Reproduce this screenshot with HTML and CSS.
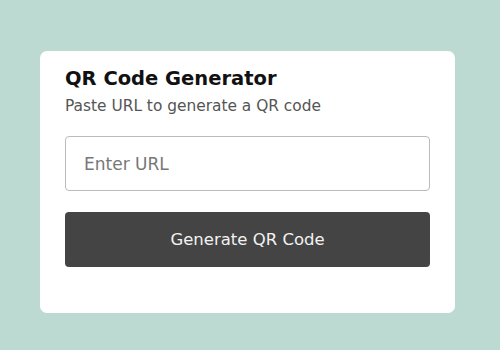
FILE: index.html
```html
<!DOCTYPE html>
<html>
<head>
<meta charset="utf-8">
<link rel="stylesheet" href="styles.css">
</head>
<body>
<div class="card">
  <h1 class="title">QR Code Generator</h1>
  <p class="subtitle">Paste URL to generate a QR code</p>
  <input class="url" type="text" placeholder="Enter URL">
  <button class="btn">Generate QR Code</button>
</div>
</body>
</html>
```
FILE: styles.css
```css
html, body {
  margin: 0;
  padding: 0;
}
body {
  background: #bcdad2;
  width: 500px;
  height: 350px;
  font-family: "DejaVu Sans", sans-serif;
  padding-top: 51px;
  box-sizing: border-box;
}
.card {
  margin-left: 40px;
  width: 415px;
  height: 262px;
  background: #fff;
  border-radius: 7px;
  box-sizing: border-box;
  padding: 16px 25px 0 25px;
  display: flex;
  flex-direction: column;
}
.title {
  margin: 0;
  font-size: 19.5px;
  font-weight: bold;
  color: #111;
  line-height: 24px;
}
.subtitle {
  margin: 5px 0 0 0;
  font-size: 15.4px;
  color: #555;
  line-height: 20px;
}
.url {
  margin-top: 20px;
  height: 55px;
  box-sizing: border-box;
  border: 1px solid #bbb;
  border-radius: 4px;
  padding: 0 18px;
  font-family: "DejaVu Sans", sans-serif;
  font-size: 17px;
  color: #333;
  outline: none;
}
.url::placeholder {
  color: #777;
}
.btn {
  margin-top: 21px;
  height: 55px;
  border: none;
  border-radius: 4px;
  background: #444;
  color: #f2f2f2;
  font-family: "DejaVu Sans", sans-serif;
  font-size: 16.5px;
}
```
